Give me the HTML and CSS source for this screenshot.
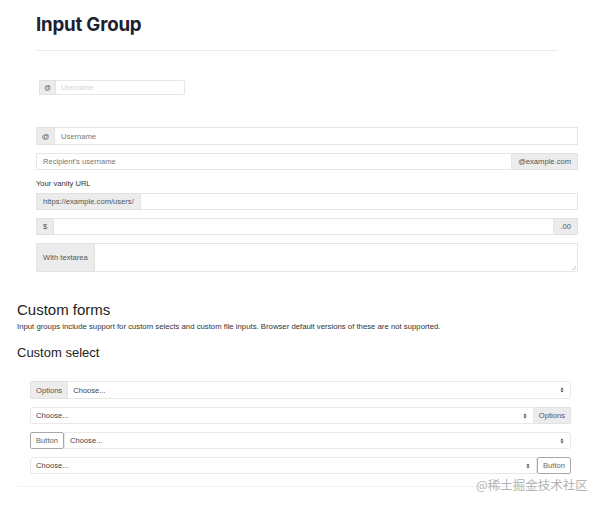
FILE: index.html
```html
<!DOCTYPE html>
<html>
<head>
<meta charset="utf-8">
<link rel="stylesheet" href="styles.css">
</head>
<body>
<div class="page">
  <h1 class="title">Input Group</h1>
  <div class="rule"></div>

  <div class="ig ig-small">
    <span class="addon">@</span>
    <span class="field ph-light">Username</span>
  </div>

  <div class="groups">
    <div class="ig">
      <span class="addon addon-at">@</span>
      <span class="field ph">Username</span>
    </div>
    <div class="ig">
      <span class="field ph">Recipient's username</span>
      <span class="addon">@example.com</span>
    </div>
    <div class="label">Your vanity URL</div>
    <div class="ig">
      <span class="addon">https://example.com/users/</span>
      <span class="field"></span>
    </div>
    <div class="ig">
      <span class="addon">$</span>
      <span class="field"></span>
      <span class="addon">.00</span>
    </div>
    <div class="ig ig-area">
      <span class="addon">With textarea</span>
      <span class="field area">
        <svg class="grip" width="5" height="5" viewBox="0 0 5 5"><path d="M5 1 L1 5 M5 3 L3 5" stroke="#aaa" stroke-width="0.6"/></svg>
      </span>
    </div>
  </div>

  <h2 class="h-forms">Custom forms</h2>
  <p class="lead">Input groups include support for custom selects and custom file inputs. Browser default versions of these are not supported.</p>
  <h3 class="h-select">Custom select</h3>

  <div class="selects">
    <div class="ig sel-row">
      <span class="addon">Options</span>
      <span class="field select">Choose...<svg class="arr" width="4" height="6" viewBox="0 0 4 6"><path d="M0.4 2.4 L2 0.6 L3.6 2.4 Z M0.4 3.6 L2 5.4 L3.6 3.6 Z" fill="#444"/></svg></span>
    </div>
    <div class="ig sel-row">
      <span class="field select">Choose...<svg class="arr" width="4" height="6" viewBox="0 0 4 6"><path d="M0.4 2.4 L2 0.6 L3.6 2.4 Z M0.4 3.6 L2 5.4 L3.6 3.6 Z" fill="#444"/></svg></span>
      <span class="addon">Options</span>
    </div>
    <div class="ig sel-row">
      <span class="btn">Button</span>
      <span class="field select">Choose...<svg class="arr" width="4" height="6" viewBox="0 0 4 6"><path d="M0.4 2.4 L2 0.6 L3.6 2.4 Z M0.4 3.6 L2 5.4 L3.6 3.6 Z" fill="#444"/></svg></span>
    </div>
    <div class="ig sel-row">
      <span class="field select">Choose...<svg class="arr" width="4" height="6" viewBox="0 0 4 6"><path d="M0.4 2.4 L2 0.6 L3.6 2.4 Z M0.4 3.6 L2 5.4 L3.6 3.6 Z" fill="#444"/></svg></span>
      <span class="btn">Button</span>
    </div>
  </div>

  <div class="bottom-line"></div>
  <div class="watermark">@稀土掘金技术社区</div>
</div>
</body>
</html>
```

FILE: styles.css
```css
* { box-sizing: border-box; }
html, body { margin: 0; padding: 0; background: #fff; }
body {
  font-family: "Liberation Sans", Arial, sans-serif;
  color: #333;
  width: 605px;
  height: 506px;
  overflow: hidden;
}
.page { position: relative; height: 506px; }

.title {
  margin: 0;
  padding: 13px 0 0 36px;
  font-family: Inter, "Liberation Sans", sans-serif;
  font-weight: 700;
  font-size: 18.7px;
  line-height: 23px;
  color: #1c2130;
  letter-spacing: -0.2px;
}
.rule {
  margin: 14px 0 0 36px;
  width: 522px;
  border-top: 1px solid #ececec;
}

.ig {
  display: flex;
  height: 18px;
  font-size: 7.6px;
  color: #555;
}
.addon {
  display: flex;
  align-items: center;
  padding: 0 6px;
  background: #ececec;
  border: 1px solid #e2e2e2;
  white-space: nowrap;
}
.field {
  flex: 1;
  display: flex;
  align-items: center;
  padding: 0 6px;
  background: #fff;
  border: 1px solid #e6e6e6;
  white-space: nowrap;
}
.ig .addon + .field { border-left: none; }
.ig .field + .addon { border-left: none; }
.ph { color: #777; }
.ph-light { color: #d4d4d4; font-size: 7px; padding-left: 5px; }

.ig-small {
  margin: 29px 0 0 39px;
  width: 146px;
  height: 15px;
  font-size: 6.5px;
}
.ig-small .addon { width: 17px; justify-content: center; padding: 0; }
.ig-small .field { border-radius: 0 2px 2px 0; }

.groups {
  margin: 32px 0 0 36px;
  width: 542px;
  display: flex;
  flex-direction: column;
  gap: 8px;
}
.groups .ig { height: 17px; }
.groups .ig:first-child { height: 18px; }
.addon-at { width: 19px; justify-content: center; padding: 0; }
.label {
  font-size: 7.6px;
  line-height: 10px;
  color: #333;
  margin: 1px 0 -4px 0;
}
.groups .ig-area { height: 29px; }
.area { position: relative; }
.grip { position: absolute; right: 1px; bottom: 1px; }

.h-forms {
  margin: 29px 0 0 17px;
  font-size: 15px;
  line-height: 18px;
  font-weight: 400;
  color: #222;
}
.lead {
  margin: 3px 0 0 17px;
  font-size: 7.75px;
  line-height: 10px;
  color: #333;
}
.h-select {
  margin: 13px 0 0 17px;
  font-size: 13px;
  line-height: 15px;
  font-weight: 400;
  color: #222;
}

.selects {
  margin: 21px 0 0 30px;
  width: 541px;
  display: flex;
  flex-direction: column;
  gap: 8px;
}
.sel-row { height: 17px; }
.sel-row:first-child { height: 18px; }
.select {
  justify-content: space-between;
  color: #444;
  padding: 0 6px 0 5px;
  border-color: #e8e8e8;
}
.sel-row > .select:last-child { border-radius: 0 3px 3px 0; }
.sel-row > .select:first-child { border-radius: 3px 0 0 3px; }
.sel-row .addon { color: #555; padding: 0 5px; }
.btn {
  display: flex;
  align-items: center;
  padding: 0 5px;
  background: #fff;
  border: 1px solid #a8a8a8;
  border-radius: 2px;
  color: #666;
  white-space: nowrap;
}

.bottom-line {
  margin: 12px 0 0 17px;
  width: 570px;
  border-top: 1px solid #f3f3f3;
}
.watermark {
  position: absolute;
  left: 476px;
  top: 477px;
  font-family: "Noto Sans CJK SC", "Liberation Sans", sans-serif;
  font-size: 12.5px;
  line-height: 16px;
  color: #b4b4b4;
  white-space: nowrap;
}
```
